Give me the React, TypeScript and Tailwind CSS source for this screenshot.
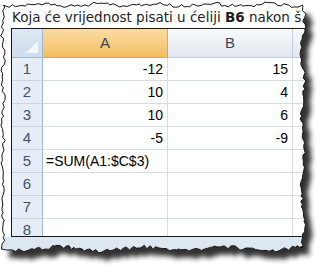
import React from 'react';

function rng(seed: number) {
  return () => {
    seed |= 0;
    seed = (seed + 0x6d2b79f5) | 0;
    let t = Math.imul(seed ^ (seed >>> 15), 1 | seed);
    t = (t + Math.imul(t ^ (t >>> 7), 61 | t)) ^ t;
    return ((t ^ (t >>> 14)) >>> 0) / 4294967296;
  };
}

function tornPoints(): [number, number][] {
  const r = rng(11);
  const pts: [number, number][] = [];
  const L = 3, T = 5, R = 303, B = 249;
  for (let x = L; x < R; x += 2 + r() * 2) pts.push([x, T + (r() - 0.5) * 3.5 + Math.sin(x / 9) * 1.2]);
  for (let y = T; y < B; y += 2 + r() * 2) pts.push([R + (r() - 0.5) * 3.5 + Math.sin(y / 11) * 1.5, y]);
  for (let x = R; x > L; x -= 2 + r() * 2) pts.push([x, B + (r() - 0.5) * 4 + Math.sin(x / 13) * 1.8]);
  for (let y = B; y > T; y -= 2 + r() * 2) pts.push([L + (r() - 0.5) * 3 + Math.sin(y / 7) * 1, y]);
  return pts;
}

const rows: [string, string, string][] = [
  ['1', '-12', '15'],
  ['2', '10', '4'],
  ['3', '10', '6'],
  ['4', '-5', '-9'],
  ['5', '=SUM(A1:$C$3)', ''],
  ['6', '', ''],
  ['7', '', ''],
  ['8', '', ''],
];

export default function App() {
  const pts = tornPoints();
  const poly = pts.map((p) => `${p[0].toFixed(1)}px ${p[1].toFixed(1)}px`).join(',');
  const svgPts = pts.map((p) => `${p[0].toFixed(1)},${p[1].toFixed(1)}`).join(' ');
  const font = { fontFamily: '"Liberation Sans", Arial, sans-serif' };

  return (
    <div className="relative w-[323px] h-[272px] bg-white overflow-hidden" style={font}>
      <svg className="absolute inset-0" width={323} height={272}>
        <defs>
          <filter id="sh" x="-10%" y="-10%" width="120%" height="120%">
            <feGaussianBlur stdDeviation="2.8" />
          </filter>
        </defs>
        <polygon points={svgPts} transform="translate(7,8)" fill="#1e1e1e" opacity="0.9" filter="url(#sh)" />
      </svg>

      <div className="absolute inset-0 bg-white flex flex-col" style={{ clipPath: `polygon(${poly})` }}>
        <div
          className="pt-[8px] pl-[12px] h-[28px] text-[13.5px] leading-[19px] text-[#1e1e1e] whitespace-nowrap"
          style={{ fontFamily: '"DejaVu Sans", Verdana, sans-serif' }}
        >
          Koja će vrijednost pisati u ćeliji <b>B6</b> nakon š
        </div>
        <div className="ml-[11px] h-[209px] border border-r-0 border-[#1a1a1a] overflow-hidden text-[14px]">
          <div className="grid grid-cols-[31px_125px_125px_40px] grid-rows-[29px_repeat(8,23px)]">
            <div className="relative bg-gradient-to-b from-[#dfe8f4] to-[#cfdcec] border-r border-b border-[#9eb6ce]">
              <svg className="absolute right-[4px] bottom-[4px]" width="12" height="12">
                <polygon points="12,0 12,12 0,12" fill="#f4f7fb" />
              </svg>
            </div>
            <div className="flex items-center justify-center bg-gradient-to-b from-[#fbdca3] to-[#f2bd62] border-r border-b border-[#e2a54b] text-[15px] text-[#3b4656]">
              A
            </div>
            <div className="flex items-center justify-center bg-gradient-to-b from-[#f8fafd] to-[#e2e8f0] border-r border-b border-[#c3ccd8] text-[15px] text-[#3b4656]">
              B
            </div>
            <div className="bg-gradient-to-b from-[#f8fafd] to-[#e2e8f0] border-b border-[#c3ccd8]" />
            {rows.map(([n, a, b]) => (
              <React.Fragment key={n}>
                <div className="flex items-center justify-center bg-[#e6edf7] border-r border-r-[#9eb6ce] border-b border-b-[#c9d5e4] text-[15px] text-[#3f536e]">
                  {n}
                </div>
                <div
                  className={`flex items-center border-r border-b border-[#d8dde5] text-black ${
                    n === '5' ? 'justify-start pl-[3px]' : 'justify-end pr-[4px]'
                  }`}
                >
                  {a}
                </div>
                <div className="flex items-center justify-end pr-[4px] border-r border-b border-[#d8dde5] text-black">
                  {b}
                </div>
                <div className="border-b border-[#d8dde5]" />
              </React.Fragment>
            ))}
          </div>
        </div>
        <div className="flex-1 bg-[#dde7f2]" />
      </div>

      <svg className="absolute inset-0 pointer-events-none" width={323} height={272}>
        <polygon points={svgPts} fill="none" stroke="#111" strokeWidth="1" />
      </svg>
    </div>
  );
}
